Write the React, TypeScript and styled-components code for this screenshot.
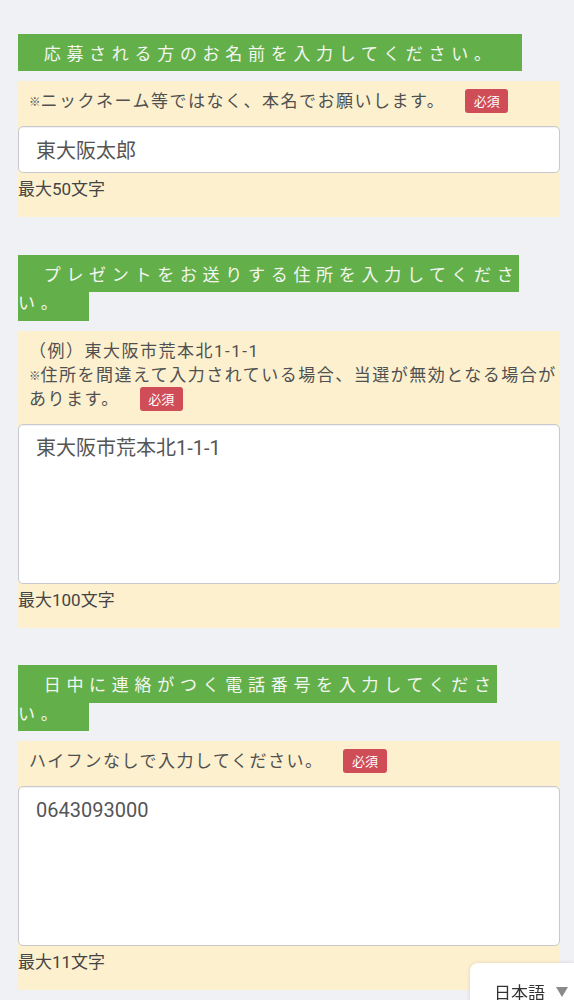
import React from "react";
import styled, { createGlobalStyle } from "styled-components";

const GlobalStyle = createGlobalStyle`
  html, body {
    margin: 0;
    padding: 0;
    background: #eff1f5;
  }
  body {
    font-family: Roboto, "Noto Sans CJK JP", sans-serif;
    color: #4a4a4a;
  }
  * { box-sizing: border-box; }
`;

const Page = styled.main`
  display: flex;
  flex-direction: column;
  gap: 43px;
  padding: 39px 14px 60px 18px;
`;

const Section = styled.section`
  display: flex;
  flex-direction: column;
`;

const Heading = styled.h2`
  margin: 0 27px 13.5px 0;
  font-family: "Noto Sans CJK JP", sans-serif;
  font-size: 17px;
  line-height: 28.5px;
  font-weight: normal;
`;

const HeadingText = styled.span`
  font-family: "Noto Sans CJK JP", sans-serif;
  background: #63b04a;
  color: #f4f6f2;
  letter-spacing: 5.7px;
  padding: 6.4px 25.7px;
`;

const Panel = styled.div`
  background: #fcf0cf;
  padding: 8px 0 16px;
  display: flex;
  flex-direction: column;
`;

const Note = styled.p`
  margin: 0 -12px 13px 0;
  padding-left: 11px;
  font-family: Roboto, "Noto Sans CJK JP", sans-serif;
  font-size: 17px;
  line-height: 24px;
  letter-spacing: 1.5px;
  color: #505050;
`;

const Mark = styled.span`
  font-family: "Noto Sans CJK JP", sans-serif;
  font-size: 11.5px;
  letter-spacing: 0;
  line-height: 0;
  vertical-align: 1.5px;
`;

const Badge = styled.span`
  display: inline-block;
  vertical-align: top;
  height: 24px;
  line-height: 24px;
  margin-left: 20px;
  padding: 0 8.5px;
  border-radius: 3px;
  background: #cf4d57;
  color: #fff;
  font-family: "Noto Sans CJK JP", sans-serif;
  font-size: 13px;
  letter-spacing: 0;
`;

const fieldBase = `
  display: block;
  width: 100%;
  margin: 0;
  background: #fff;
  border: 1px solid #c7c9cf;
  border-radius: 5px;
  box-shadow: inset 0 1px 1px rgba(0, 0, 0, 0.06);
  font-family: Roboto, "Noto Sans CJK JP", sans-serif;
  font-size: 20px;
  color: #555;
  outline: none;
`;

const TextInput = styled.input`
  ${fieldBase}
  height: 47px;
  padding: 0 17px;
`;

const TextArea = styled.textarea`
  ${fieldBase}
  height: 160px;
  padding: 11px 17px;
  line-height: 24px;
  resize: none;
`;

const Counter = styled.div`
  margin-top: 4px;
  font-size: 17px;
  line-height: 24px;
  color: #444;
`;

const LangBox = styled.div`
  position: fixed;
  right: 0;
  bottom: -20px;
  width: 104px;
  height: 57px;
  background: #fff;
  border-top-left-radius: 8px;
  box-shadow: 0 0 4px rgba(0, 0, 0, 0.12);
  display: flex;
  align-items: center;
  gap: 11px;
  padding-left: 24px;
  font-family: "Noto Sans CJK JP", sans-serif;
  font-size: 17px;
  color: #333;
`;

const Caret = () => (
  <svg width="12" height="10" viewBox="0 0 12 10" aria-hidden="true">
    <polygon points="0,0 12,0 6,10" fill="#8a8a8a" />
  </svg>
);

export default function App() {
  return (
    <>
      <GlobalStyle />
      <Page>
        <Section>
          <Heading>
            <HeadingText>応募される方のお名前を入力してください。</HeadingText>
          </Heading>
          <Panel>
            <Note>
              <Mark>※</Mark>ニックネーム等ではなく、本名でお願いします。
              <Badge>必須</Badge>
            </Note>
            <TextInput type="text" value="東大阪太郎" readOnly />
            <Counter>最大50文字</Counter>
          </Panel>
        </Section>

        <Section>
          <Heading>
            <HeadingText>プレゼントをお送りする住所を入力してください。</HeadingText>
          </Heading>
          <Panel>
            <Note>
              （例）東大阪市荒本北1-1-1
              <br />
              <Mark>※</Mark>住所を間違えて入力されている場合、当選が無効となる場合があります。
              <Badge>必須</Badge>
            </Note>
            <TextArea value="東大阪市荒本北1-1-1" readOnly />
            <Counter>最大100文字</Counter>
          </Panel>
        </Section>

        <Section>
          <Heading>
            <HeadingText>日中に連絡がつく電話番号を入力してください。</HeadingText>
          </Heading>
          <Panel>
            <Note>
              ハイフンなしで入力してください。
              <Badge>必須</Badge>
            </Note>
            <TextArea value="0643093000" readOnly />
            <Counter>最大11文字</Counter>
          </Panel>
        </Section>
      </Page>
      <LangBox>
        日本語
        <Caret />
      </LangBox>
    </>
  );
}
